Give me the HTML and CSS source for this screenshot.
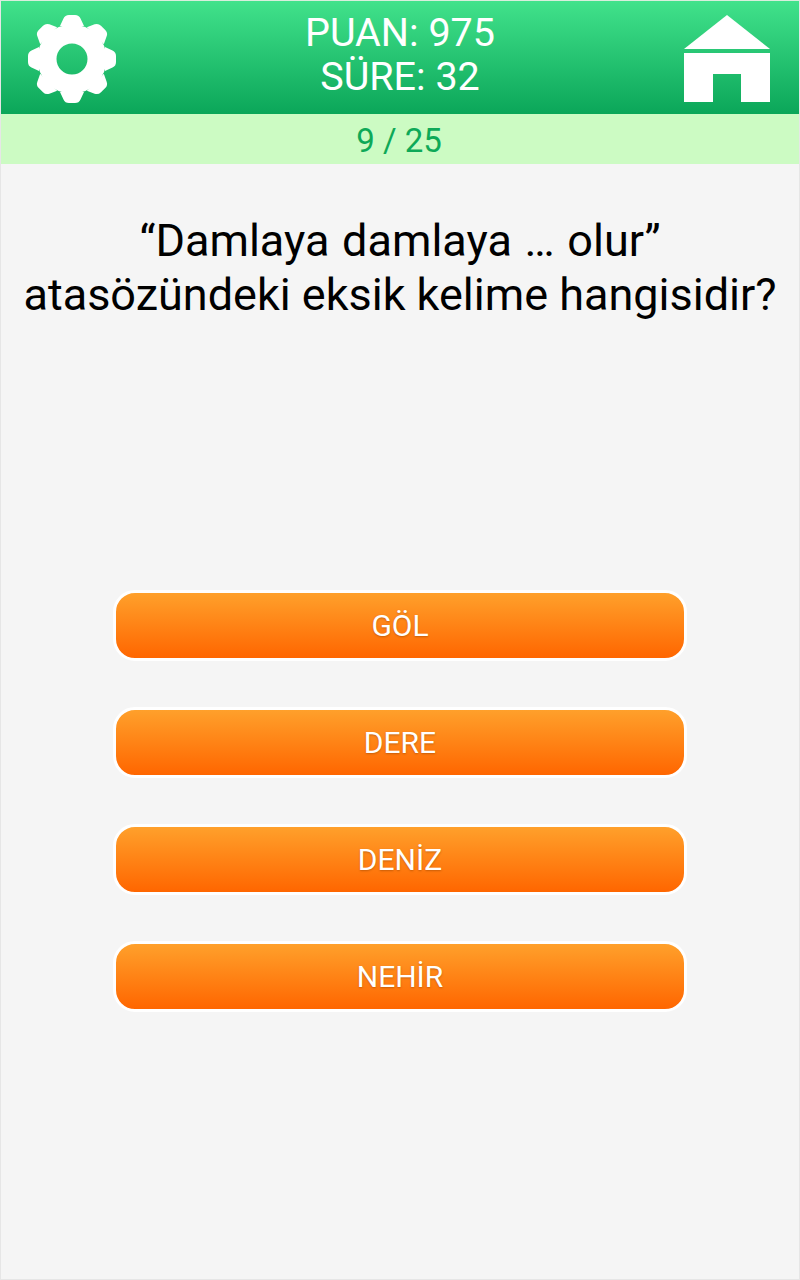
FILE: index.html
```html
<!DOCTYPE html>
<html lang="tr">
<head>
<meta charset="utf-8">
<title>Bilgi Yarışması</title>
<link rel="stylesheet" href="styles.css">
</head>
<body>
<div class="app">
  <header class="topbar">
    <svg class="gear" viewBox="-44 -44 88 88" width="88" height="88" aria-hidden="true">
      <defs><path id="tooth" d="M-12 -33 L-8.500 -40.500 Q-7 -44 -3 -44 L3 -44 Q7 -44 8.500 -40.500 L12 -33 Z"/></defs>
      <circle class="gear-ring" r="25"/>
      <use href="#tooth"/>
      <use href="#tooth" transform="rotate(45)"/>
      <use href="#tooth" transform="rotate(90)"/>
      <use href="#tooth" transform="rotate(135)"/>
      <use href="#tooth" transform="rotate(180)"/>
      <use href="#tooth" transform="rotate(225)"/>
      <use href="#tooth" transform="rotate(270)"/>
      <use href="#tooth" transform="rotate(315)"/>
    </svg>
    <div class="score">
      <div>PUAN: 975</div>
      <div>SÜRE: 32</div>
    </div>
    <svg class="home" viewBox="0 0 86 87" width="86" height="87" aria-hidden="true">
      <path d="M43 0 L86 34 L0 34 Z"/>
      <path d="M0 38 H86 V87 H57 V59 H29 V87 H0 Z"/>
    </svg>
  </header>
  <div class="progress">9 / 25</div>
  <main class="quiz">
    <h1 class="question"><span class="proverb">“Damlaya damlaya … olur”</span><br>atasözündeki eksik kelime hangisidir?</h1>
    <div class="answers">
      <button class="answer">GÖL</button>
      <button class="answer">DERE</button>
      <button class="answer">DENİZ</button>
      <button class="answer">NEHİR</button>
    </div>
  </main>
</div>
</body>
</html>
```
FILE: styles.css
```css
* { box-sizing: border-box; }
html, body { margin: 0; padding: 0; }
body { width: 800px; height: 1280px; font-family: Roboto, "Noto Sans", sans-serif; background: #f5f5f5; }
.app { width: 800px; height: 1280px; border: 1px solid #e6e6e6; border-top-color: #d8eedd; background: #f5f5f5; display: flex; flex-direction: column; }
.topbar { height: 113px; flex: none; display: flex; align-items: flex-start; padding: 14px 29px 0 27px; background: linear-gradient(#41e28b, #0ba659); }
.gear { flex: none; fill: #fff; }
.gear-ring { fill: none; stroke: #fff; stroke-width: 19px; }
.home { flex: none; fill: #fff; }
.score { flex: 1; margin-top: -4px; text-align: center; color: #fff; font-size: 39.500px; line-height: 44px; }
.progress { height: 50px; flex: none; background: #ccfbc3; color: #0ea958; font-size: 33px; line-height: 54px; text-align: center; padding-right: 2px; }
.quiz { flex: 1; display: flex; flex-direction: column; align-items: center; }
.question { margin: 50px 0 0; height: 376px; width: 100%; font-weight: 400; font-size: 45px; line-height: 54px; text-align: center; color: #000; }
.proverb { word-spacing: 1.500px; }
.answers { display: flex; flex-direction: column; gap: 46px; }
.answer { display: block; width: 574px; height: 71px; padding: 1px 0 0; border: 3px solid #fff; border-radius: 22px; background: linear-gradient(#ffa02b, #ff6600); color: #fff; font-family: inherit; font-size: 30px; line-height: 64px; text-align: center; text-shadow: 0 1px 2px rgba(130, 60, 0, 0.45); }
```
